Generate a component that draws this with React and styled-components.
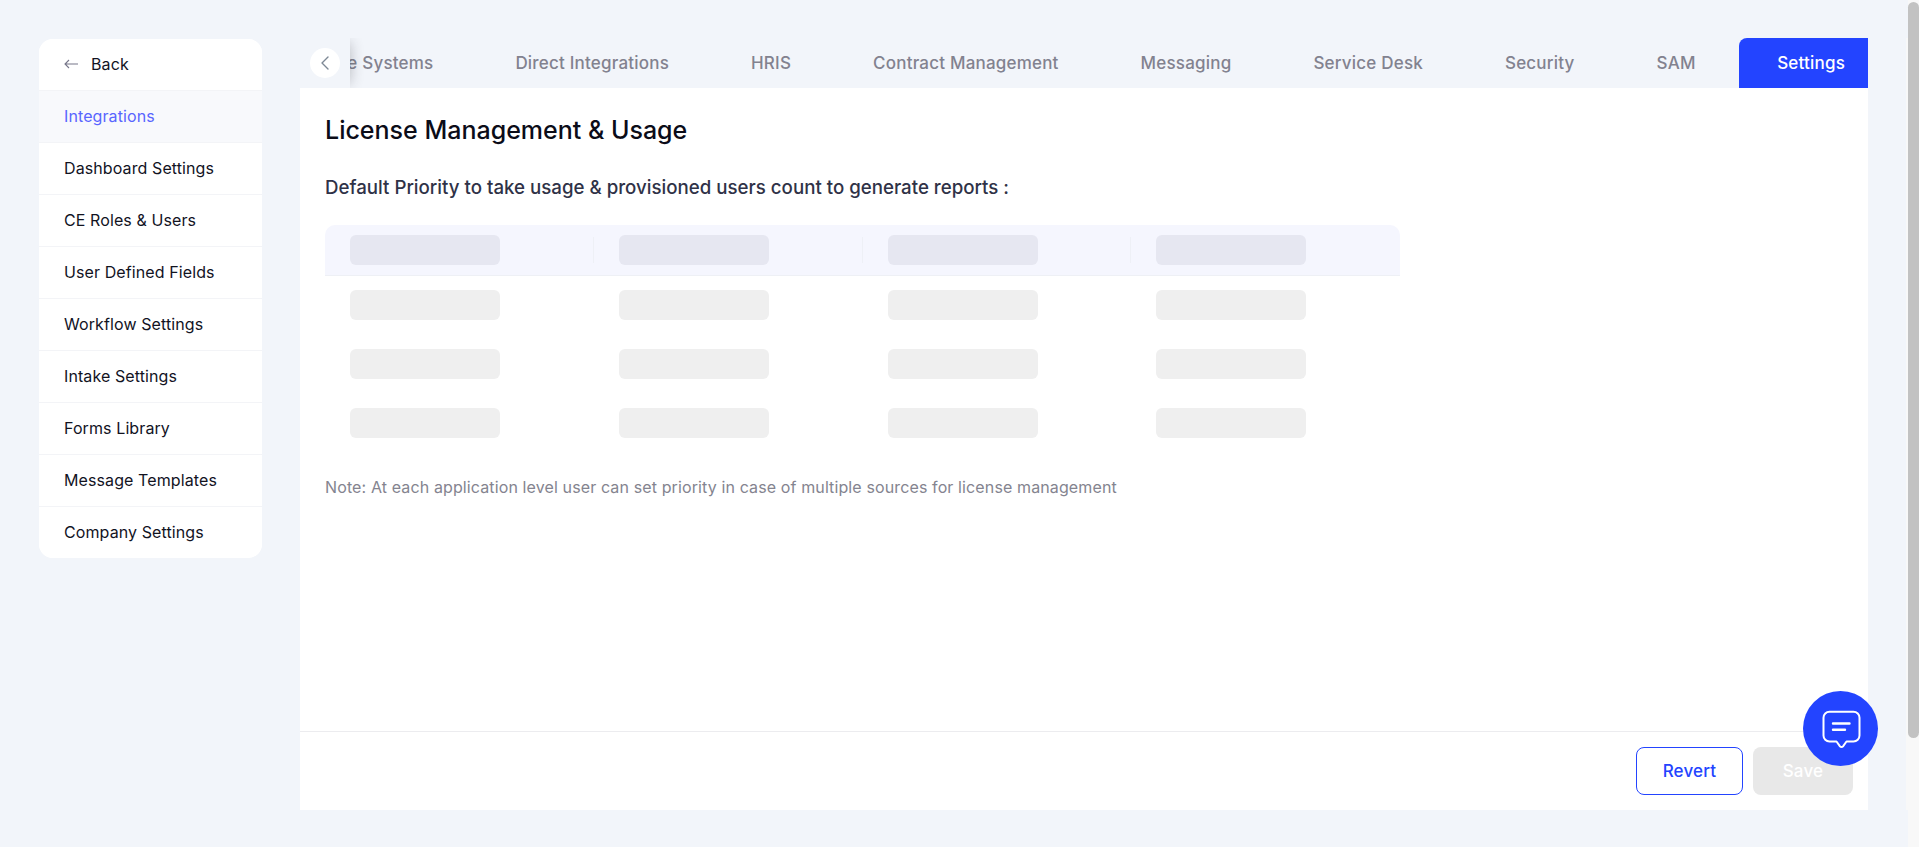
import React from "react";
import styled, { createGlobalStyle } from "styled-components";
import { ChevronLeft } from "lucide-react";

const Global = createGlobalStyle`
  html, body { margin: 0; padding: 0; height: 100%; overflow: hidden; background: #f2f5fa; }
  body { font-family: Inter, "Liberation Sans", sans-serif; }
  * { box-sizing: border-box; }
`;

const Page = styled.div`
  display: grid;
  grid-template-columns: 223px 1568px;
  column-gap: 38px;
  align-items: start;
  height: 847px;
  padding: 38px 0 0 39px;
`;

const Sidebar = styled.nav`
  background: #fff;
  border-radius: 14px;
  margin-top: 1px;
  overflow: hidden;
`;

const NavRow = styled.div`
  display: flex;
  align-items: center;
  gap: 13px;
  height: 52px;
  padding: 0 25px 2px;
  font-size: 16px;
  letter-spacing: 0.1px;
  color: ${(p) => (p.$active ? "#5865ff" : "#12131f")};
  background: ${(p) => (p.$active ? "#f8f9fc" : "#fff")};
  border-bottom: 1px solid #f3f4f7;
  &:last-child { border-bottom: 0; height: 51px; }
`;

const Main = styled.main`
  display: flex;
  flex-direction: column;
  width: 1568px;
`;

const TabStrip = styled.div`
  position: relative;
  display: flex;
  justify-content: flex-end;
  height: 50px;
  overflow: hidden;
  flex: none;
`;

const Tab = styled.div`
  flex: none;
  display: flex;
  align-items: center;
  height: 50px;
  margin-left: ${(p) => (p.$active ? "2.5px" : "0")};
  padding: ${(p) => (p.$active ? "0 23px 0 38px" : "0 41px")};
  font-size: 17px;
  letter-spacing: 0.2px;
  font-weight: 500;
  white-space: nowrap;
  color: ${(p) => (p.$active ? "#fff" : "#82828f")};
  background: ${(p) => (p.$active ? "#2344ff" : "transparent")};
  border-radius: ${(p) => (p.$active ? "8px 0 0 0" : "0")};
`;

const ScrollCover = styled.div`
  position: absolute;
  left: 0;
  top: 0;
  width: 50px;
  height: 50px;
  background: #f2f5fa;
  box-shadow: 5px 0 14px -5px rgba(40, 40, 50, 0.3);
  display: flex;
  align-items: center;
  padding-left: 10px;
`;

const ScrollBack = styled.div`
  width: 30px;
  height: 30px;
  border-radius: 50%;
  background: #fff;
  color: #7d8895;
  display: flex;
  align-items: center;
  justify-content: center;
`;

const Card = styled.section`
  background: #fff;
  height: 722px;
  display: flex;
  flex-direction: column;
`;

const Body = styled.div`
  flex: 1;
  padding: 24px 25px 0;
`;

const Title = styled.h1`
  margin: 0;
  font-size: 25px;
  line-height: 36px;
  font-weight: 500;
  color: #0b0c18;
`;

const Subtitle = styled.p`
  margin: 27px 0 0;
  font-size: 18.7px;
  line-height: 26px;
  font-weight: 500;
  color: #2f3247;
`;

const Table = styled.div`
  margin-top: 24px;
  width: 1075px;
`;

const HeadRow = styled.div`
  display: grid;
  grid-template-columns: repeat(4, 1fr);
  align-items: center;
  height: 51px;
  background: #f5f6fe;
  border-bottom: 1px solid #eef0f5;
  border-radius: 10px 10px 0 0;
`;

const DataRow = styled.div`
  display: grid;
  grid-template-columns: repeat(4, 1fr);
  align-items: center;
  height: 59px;
  padding-bottom: 1px;
`;

const Cell = styled.div`
  position: relative;
  padding-left: 25px;
  display: flex;
  align-items: center;
  ${(p) =>
    p.$divided
      ? `&::after { content: ""; position: absolute; right: 0; top: 2px; bottom: 2px; width: 1px; background: #eef0f6; }`
      : ""}
`;

const Bar = styled.div`
  width: 150px;
  height: 30px;
  border-radius: 6px;
  background: ${(p) => (p.$head ? "#e6e7f1" : "#efefef")};
`;

const Note = styled.p`
  margin: 22px 0 0;
  font-size: 16px;
  line-height: 24px;
  letter-spacing: 0.12px;
  color: #84848f;
`;

const Footer = styled.footer`
  flex: none;
  height: 79px;
  border-top: 1px solid #ececef;
  display: flex;
  justify-content: flex-end;
  gap: 10px;
  padding: 15px 15px 0 0;
`;

const Button = styled.button`
  height: 48px;
  width: ${(p) => (p.$primary ? "100px" : "107px")};
  border-radius: 8px;
  font-family: inherit;
  font-size: 17px;
  letter-spacing: 0.2px;
  font-weight: 500;
  color: ${(p) => (p.$primary ? "#fff" : "#2344ff")};
  background: ${(p) => (p.$primary ? "#e8e8e8" : "#fff")};
  border: ${(p) => (p.$primary ? "0" : "1px solid #2344ff")};
`;

const ChatBubble = styled.div`
  position: fixed;
  left: 1803px;
  top: 691px;
  width: 75px;
  height: 75px;
  border-radius: 50%;
  background: #2344ff;
  display: flex;
  align-items: center;
  justify-content: center;
`;

const Track = styled.div`
  position: fixed;
  top: 0;
  right: 0;
  bottom: 0;
  width: 14px;
  background: #f8f8f8;
  border-right: 1px solid #fff;
  &::before,
  &::after {
    content: "";
    position: absolute;
    left: 0;
    width: 2px;
    background: #f2f5fa;
  }
  &::before { top: 0; height: 38px; }
  &::after { top: 810px; bottom: 0; }
`;

const Thumb = styled.div`
  position: absolute;
  top: 2px;
  left: 2px;
  width: 11px;
  height: 736px;
  border-radius: 6px;
  background: #c2c2c2;
`;

const nav = [
  "Integrations",
  "Dashboard Settings",
  "CE Roles & Users",
  "User Defined Fields",
  "Workflow Settings",
  "Intake Settings",
  "Forms Library",
  "Message Templates",
  "Company Settings",
];

const tabs = [
  "Finance Systems",
  "Direct Integrations",
  "HRIS",
  "Contract Management",
  "Messaging",
  "Service Desk",
  "Security",
  "SAM",
];

const BackArrow = () => (
  <svg width="14" height="10" viewBox="0 0 14 10" fill="none">
    <path d="M5 1 1 5l4 4M1 5h13" stroke="#77778a" strokeWidth="1.1" />
  </svg>
);

const ChatIcon = () => (
  <svg width="42" height="42" viewBox="0 0 42 42" fill="none">
    <path
      d="M9.5 3.8h24a6 6 0 0 1 6 6v17.7a6 6 0 0 1-6 6h-7L23 38.3a2 2 0 0 1-3 0l-3.5-4.8h-7a6 6 0 0 1-6-6V9.8a6 6 0 0 1 6-6Z"
      stroke="#fff"
      strokeWidth="2"
      strokeLinejoin="round"
    />
    <path d="M13 15.5h16.5M13 21.8h12" stroke="#fff" strokeWidth="2.4" strokeLinecap="round" />
  </svg>
);

export default function App() {
  return (
    <>
      <Global />
      <Page>
        <Sidebar>
          <NavRow>
            <BackArrow />
            Back
          </NavRow>
          {nav.map((n, i) => (
            <NavRow key={n} $active={i === 0}>
              {n}
            </NavRow>
          ))}
        </Sidebar>
        <Main>
          <TabStrip>
            {tabs.map((t) => (
              <Tab key={t}>{t}</Tab>
            ))}
            <Tab $active>Settings</Tab>
            <ScrollCover>
              <ScrollBack>
                <ChevronLeft size={24} strokeWidth={1.4} />
              </ScrollBack>
            </ScrollCover>
          </TabStrip>
          <Card>
            <Body>
              <Title>License Management &amp; Usage</Title>
              <Subtitle>Default Priority to take usage &amp; provisioned users count to generate reports :</Subtitle>
              <Table>
                <HeadRow>
                  {[0, 1, 2, 3].map((c) => (
                    <Cell key={c} $divided={c < 3}>
                      <Bar $head />
                    </Cell>
                  ))}
                </HeadRow>
                {[0, 1, 2].map((r) => (
                  <DataRow key={r}>
                    {[0, 1, 2, 3].map((c) => (
                      <Cell key={c}>
                        <Bar />
                      </Cell>
                    ))}
                  </DataRow>
                ))}
              </Table>
              <Note>Note: At each application level user can set priority in case of multiple sources for license management</Note>
            </Body>
            <Footer>
              <Button>Revert</Button>
              <Button $primary>Save</Button>
            </Footer>
          </Card>
        </Main>
      </Page>
      <ChatBubble>
        <ChatIcon />
      </ChatBubble>
      <Track>
        <Thumb />
      </Track>
    </>
  );
}
